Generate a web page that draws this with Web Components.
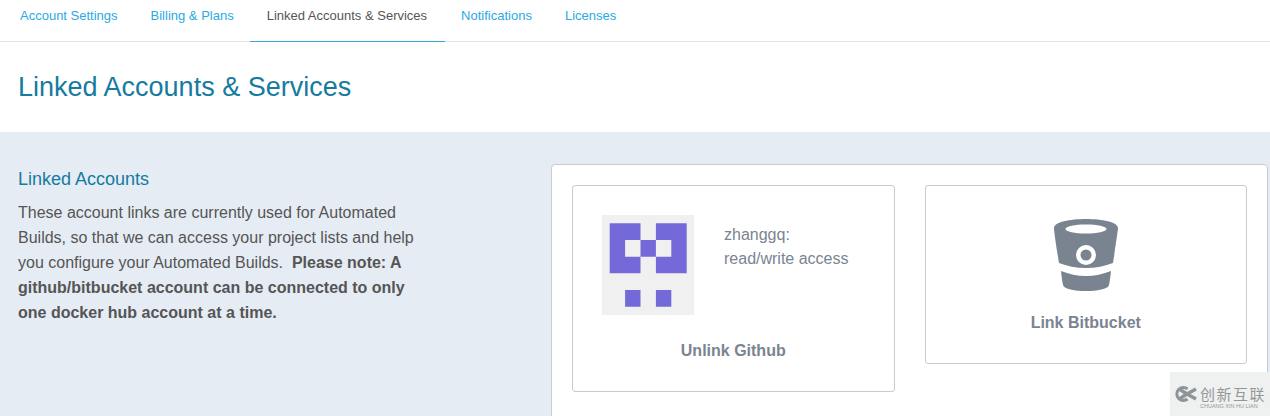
<!DOCTYPE html>
<html>
<head>
<meta charset="utf-8">
<title>Linked Accounts &amp; Services</title>
<style>
  html, body { margin: 0; height: 416px; overflow: hidden; background: #fff; }
  body { font-family: "Liberation Sans", Arial, sans-serif; color: #555; }
</style>
</head>
<body>
<dh-tabs>
  <dh-tab>Account Settings</dh-tab>
  <dh-tab>Billing &amp; Plans</dh-tab>
  <dh-tab active>Linked Accounts &amp; Services</dh-tab>
  <dh-tab>Notifications</dh-tab>
  <dh-tab>Licenses</dh-tab>
</dh-tabs>
<dh-title>Linked Accounts &amp; Services</dh-title>
<dh-section>
  <dh-intro slot="intro" heading="Linked Accounts">
    These account links are currently used for Automated Builds, so that we can access your project lists and help you configure your Automated Builds.&nbsp; <b>Please note: A github/bitbucket account can be connected to only one docker hub account at a time.</b>
  </dh-intro>
  <dh-panel slot="panel">
    <dh-link-card action="Unlink Github" class="github">
      <dh-avatar></dh-avatar>
      <div style="margin:8px 0 0 30px">zhanggq:<br>read/write access</div>
    </dh-link-card>
    <dh-link-card action="Link Bitbucket" class="bitbucket">
      <svg width="64" height="72" viewBox="0 0 64 72" style="display:block">
        <path fill="#7a8491" fill-rule="evenodd" d="M0 9C0 3 16 0 32 0s32 3 32 9c0 1-.5 6-5 35-8 3-17 5-27 5S13 47 5 44C1 20 0 11 0 9zM32 5.500C20.700 5.500 11.500 7.500 11.500 10s9.200 4.500 20.500 4.500 20.500-2 20.500-4.500S43.300 5.500 32 5.500zM32 26a10 10 0 1 0 0 20 10 10 0 0 0 0-20z"/>
        <circle cx="32" cy="36" r="5.500" fill="#7a8491"/>
        <path fill="#7a8491" d="M7 52c8 3 16 5 25 5s17-2 25-5c-.5 5-1 9-2 14-1 4-12 6-23 6S10 70 9 66c-1-5-1.500-9-2-14z"/>
      </svg>
    </dh-link-card>
  </dh-panel>
</dh-section>
<dh-watermark></dh-watermark>

<script>
class DhTabs extends HTMLElement {
  constructor() {
    super();
    this.attachShadow({ mode: 'open' });
    this.shadowRoot.innerHTML = `
      <style>
        :host { display: flex; height: 41px; border-bottom: 1px solid #e1e6eb; }
      </style>
      <slot></slot>
    `;
  }
}

class DhTab extends HTMLElement {
  constructor() {
    super();
    this.attachShadow({ mode: 'open' });
    this.shadowRoot.innerHTML = `
      <style>
        :host {
          display: block;
          height: 42px;
          box-sizing: border-box;
          padding: 0 16.5px;
          font-size: 13px;
          line-height: 31px;
          color: #2aaae2;
          white-space: nowrap;
        }
        :host(:first-child) { padding-left: 20px; }
        :host([active]) { color: #555; border-bottom: 1px solid #38a7d3; padding-right: 17.5px; }
      </style>
      <slot></slot>
    `;
  }
}

class DhTitle extends HTMLElement {
  constructor() {
    super();
    this.attachShadow({ mode: 'open' });
    this.shadowRoot.innerHTML = `
      <style>
        :host {
          display: block;
          height: 90px;
          box-sizing: border-box;
          padding-left: 18px;
          font-size: 27px;
          line-height: 90px;
          color: #157ba0;
        }
      </style>
      <slot></slot>
    `;
  }
}

class DhSection extends HTMLElement {
  constructor() {
    super();
    this.attachShadow({ mode: 'open' });
    this.shadowRoot.innerHTML = `
      <style>
        :host {
          display: flex;
          height: 284px;
          box-sizing: border-box;
          background: #e5ecf4;
          padding: 32px 2px 0 18px;
        }
        .left { width: 533px; flex: none; }
        .right { flex: 1; }
      </style>
      <div class="left"><slot name="intro"></slot></div>
      <div class="right"><slot name="panel"></slot></div>
    `;
  }
}

class DhIntro extends HTMLElement {
  constructor() {
    super();
    this.attachShadow({ mode: 'open' });
    this.shadowRoot.innerHTML = `
      <style>
        :host { display: block; width: 400px; font-size: 16px; line-height: 25px; color: #555; }
        h2 { margin: 0 0 6px; font-size: 18px; font-weight: normal; line-height: 30px; color: #157ba0; }
      </style>
      <h2></h2>
      <slot></slot>
    `;
    this.shadowRoot.querySelector('h2').textContent = this.getAttribute('heading');
  }
}

class DhPanel extends HTMLElement {
  constructor() {
    super();
    this.attachShadow({ mode: 'open' });
    this.shadowRoot.innerHTML = `
      <style>
        :host {
          display: flex;
          gap: 30px;
          align-items: flex-start;
          box-sizing: border-box;
          height: 300px;
          padding: 20px 20px 0 20px;
          background: #fff;
          border: 1px solid #c8ccd0;
          border-radius: 4px;
        }
      </style>
      <slot></slot>
    `;
  }
}

class DhLinkCard extends HTMLElement {
  constructor() {
    super();
    this.attachShadow({ mode: 'open' });
    this.shadowRoot.innerHTML = `
      <style>
        :host {
          display: block;
          flex: 1;
          box-sizing: border-box;
          border: 1px solid #c8ccd0;
          border-radius: 3px;
          background: #fff;
          color: #7a8491;
          font-size: 16px;
          line-height: 24px;
        }
        :host(.github) { height: 207px; padding: 29px 29px 0; }
        :host(.bitbucket) { height: 179px; padding: 33px 29px 0; }
        .body { display: flex; }
        :host(.bitbucket) .body { justify-content: center; }
        .action { font-weight: bold; text-align: center; margin: 0 -29px; }
        :host(.github) .action { margin-top: 24px; }
        :host(.bitbucket) .action { margin-top: 20px; }
      </style>
      <div class="body"><slot></slot></div>
      <div class="action"></div>
    `;
    this.shadowRoot.querySelector('.action').textContent = this.getAttribute('action');
  }
}

class DhAvatar extends HTMLElement {
  constructor() {
    super();
    this.attachShadow({ mode: 'open' });
    this.shadowRoot.innerHTML = `
      <style>
        :host { display: block; width: 92px; height: 100px; flex: none; }
        svg { display: block; }
      </style>
      <svg width="92" height="100" viewBox="0 0 92 100">
        <rect width="92" height="100" fill="#f0f0f0"/>
        <path fill="#7469d9" fill-rule="evenodd" d="M7.700 8.300H38.500V58.300H7.700zM23.100 25V41.700H38.500V25zM53.900 8.300H84.700V58.300H53.900zM53.900 25V41.700H69.300V25zM38.500 25H53.900V41.700H38.500zM23.100 75H38.500V91.700H23.100zM53.900 75H69.300V91.700H53.900z"/>
      </svg>
    `;
  }
}

class DhWatermark extends HTMLElement {
  constructor() {
    super();
    this.attachShadow({ mode: 'open' });
    this.shadowRoot.innerHTML = `
      <style>
        :host {
          position: absolute;
          right: 0;
          top: 372px;
          width: 100px;
          height: 44px;
          background: #eff0f0;
          display: flex;
          align-items: flex-start;
          gap: 3px;
          padding: 13px 0 0 3px;
          box-sizing: border-box;
          color: #94989a;
          font-family: "Noto Sans CJK SC", sans-serif;
        }
        svg { flex: none; margin-top: 1px; }
        .cn { font-size: 15px; line-height: 17px; letter-spacing: 1.500px; white-space: nowrap; }
        .en { font-family: "Liberation Sans", sans-serif; font-size: 5.500px; line-height: 6px; margin-top: 1px; white-space: nowrap; }
      </style>
      <svg width="24" height="16" viewBox="0 0 24 16">
        <path fill="none" stroke="#8f9496" stroke-width="3" d="M14.500 3A6.500 6.500 0 1 0 14.500 13"/>
        <path fill="none" stroke="#8f9496" stroke-width="3.500" d="M7 3.500l7 4.500-7 4.500M23 3l-9 5 9 5"/>
      </svg>
      <div>
        <div class="cn">创新互联</div>
        <div class="en">CHUANG XIN HU LIAN</div>
      </div>
    `;
  }
}

customElements.define('dh-tabs', DhTabs);
customElements.define('dh-tab', DhTab);
customElements.define('dh-title', DhTitle);
customElements.define('dh-section', DhSection);
customElements.define('dh-intro', DhIntro);
customElements.define('dh-panel', DhPanel);
customElements.define('dh-link-card', DhLinkCard);
customElements.define('dh-avatar', DhAvatar);
customElements.define('dh-watermark', DhWatermark);
</script>
</body>
</html>
